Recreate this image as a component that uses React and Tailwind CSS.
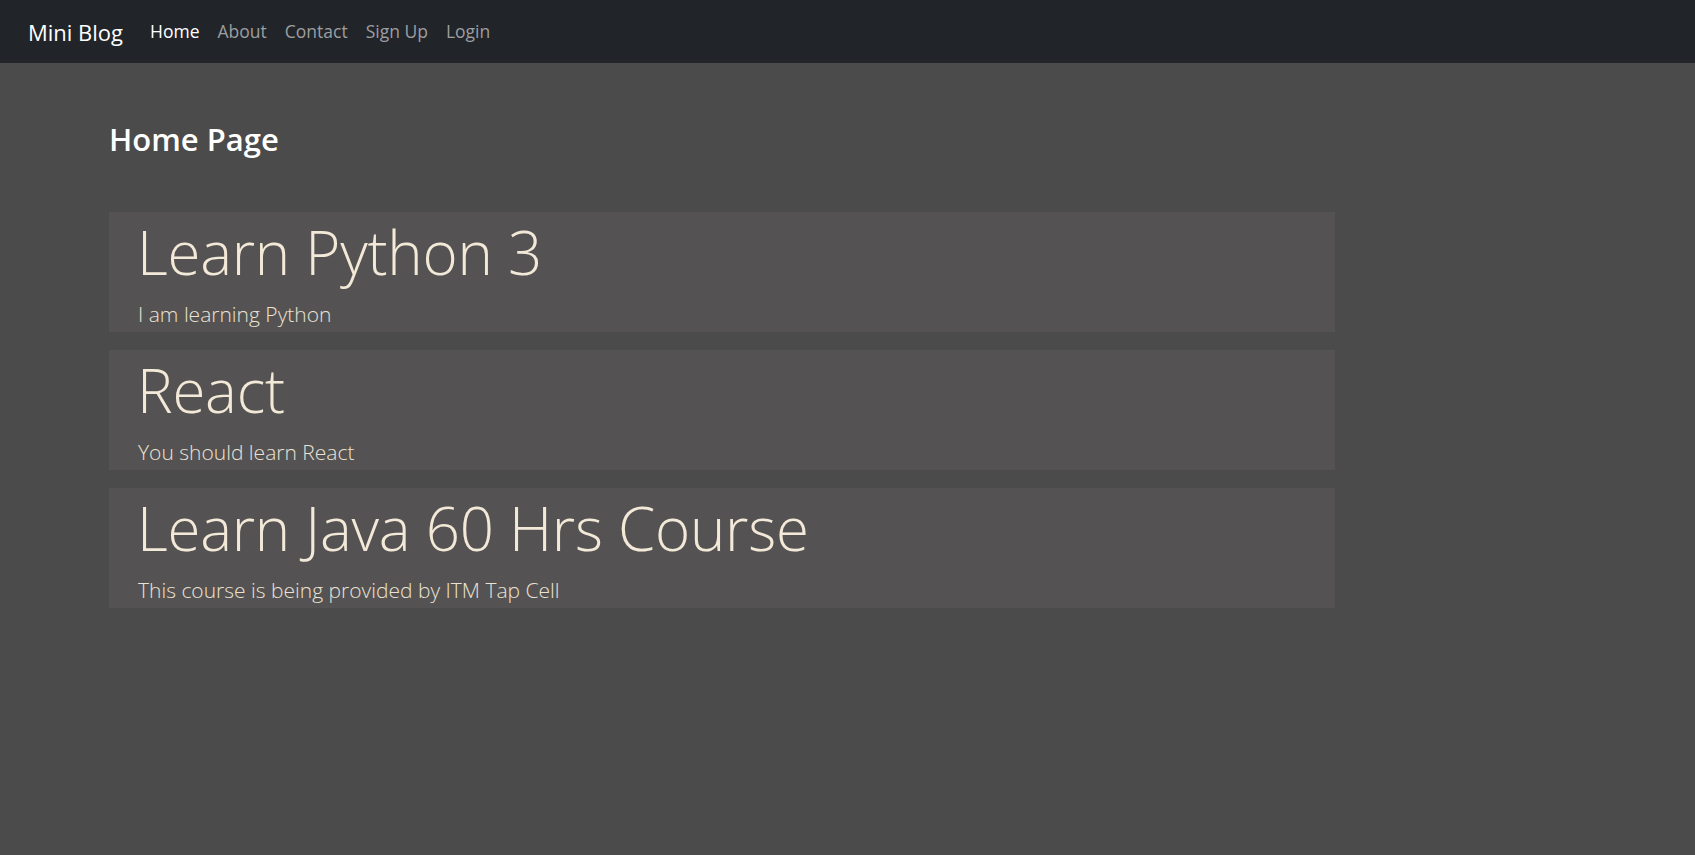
export default function App() {
  const posts = [
    { title: "Learn Python 3", body: "I am learning Python" },
    { title: "React", body: "You should learn React" },
    { title: "Learn Java 60 Hrs Course", body: "This course is being provided by ITM Tap Cell" },
  ];
  return (
    <div className="min-h-[855px] bg-[#4b4b4b]" style={{ fontFamily: '"Open Sans", "Noto Sans", sans-serif' }}>
      <nav className="h-[63px] bg-[#212529] flex items-center pl-[28px]">
        <span className="text-[22px] text-white mr-[27px] leading-none">Mini Blog</span>
        <div className="flex items-center gap-[18px] text-[17.5px] leading-none">
          <span className="text-white">Home</span>
          <span className="text-[#9c9ea1]">About</span>
          <span className="text-[#9c9ea1]">Contact</span>
          <span className="text-[#9c9ea1]">Sign Up</span>
          <span className="text-[#9c9ea1]">Login</span>
        </div>
      </nav>
      <main className="pl-[109px] pt-[58px]">
        <h2 className="text-[31px] font-semibold text-white leading-[1.2] mb-[54px]">Home Page</h2>
        <div className="w-[1226px] flex flex-col gap-[18px]">
          {posts.map((p) => (
            <div key={p.title} className="h-[120px] bg-[#545252] pl-[28px] pt-[3px] text-[#f3e9d8]">
              <div className="text-[60px] font-light leading-[74px] tracking-[-0.25px]">{p.title}</div>
              <div className="text-[21px] font-light leading-[1.2] mt-[13px] pl-px text-[#ebe2d4]">{p.body}</div>
            </div>
          ))}
        </div>
      </main>
    </div>
  );
}
